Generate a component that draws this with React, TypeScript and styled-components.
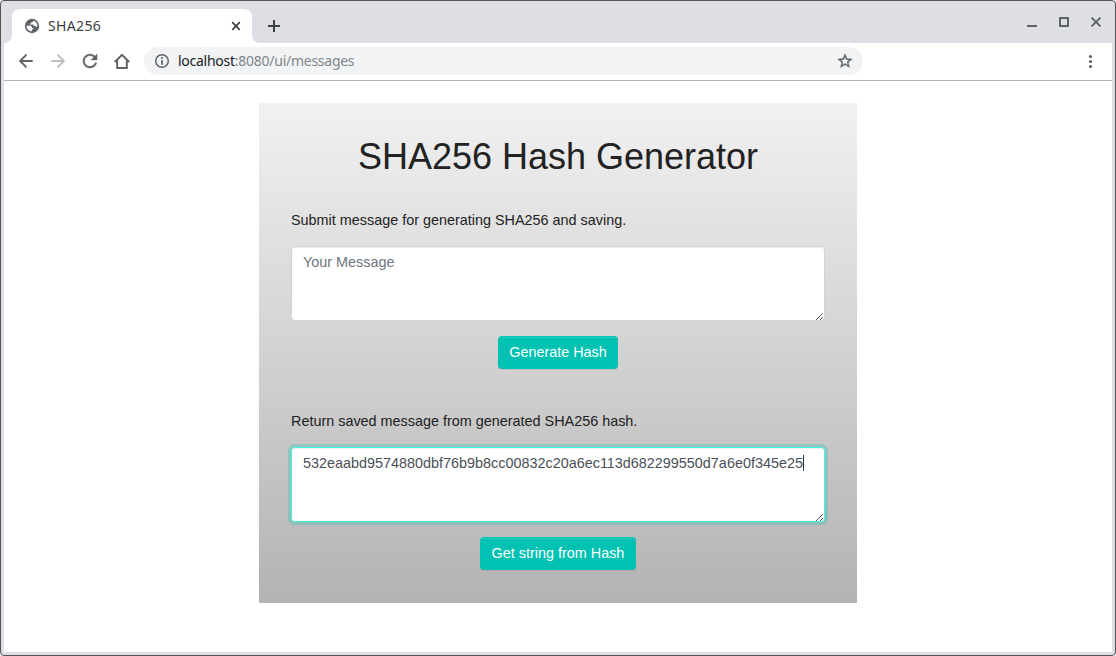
import React from 'react';
import styled, { createGlobalStyle } from 'styled-components';

const GlobalStyle = createGlobalStyle`
  * { box-sizing: border-box; }
  html, body { margin: 0; padding: 0; background: #fff; }
  body { font-family: "Liberation Sans", Arial, sans-serif; overflow: hidden; }
`;

const Window = styled.div`
  width: 1116px;
  height: 656px;
  display: flex;
  flex-direction: column;
  padding: 0 3px 3px;
  border: 1px solid #535257;
  border-radius: 4px;
  background: #dedfe5;
`;

const TabStrip = styled.header`
  height: 42px;
  display: flex;
  align-items: flex-end;
  padding-left: 8px;
  flex: none;
`;

const Tab = styled.div`
  position: relative;
  width: 240px;
  height: 34px;
  display: flex;
  align-items: center;
  padding: 0 9px 0 12px;
  background: #fff;
  border-radius: 8px 8px 0 0;
  &::before,
  &::after {
    content: '';
    position: absolute;
    bottom: 0;
    width: 8px;
    height: 8px;
  }
  &::before {
    left: -8px;
    background: radial-gradient(circle at 0 0, transparent 7.5px, #fff 8.5px);
  }
  &::after {
    right: -8px;
    background: radial-gradient(circle at 100% 0, transparent 7.5px, #fff 8.5px);
  }
`;

const TabTitle = styled.span`
  flex: 1;
  margin-left: 8px;
  font: 14px/18px "Noto Sans", "Open Sans", sans-serif;
  letter-spacing: 0.35px;
  color: #3c4043;
`;

const NewTab = styled.div`
  display: flex;
  margin-left: 14px;
  padding-bottom: 9px;
`;

const WindowControls = styled.div`
  display: flex;
  gap: 16px;
  margin-left: auto;
  padding: 0 8px 13px 0;
`;

const Toolbar = styled.nav`
  height: 38px;
  display: flex;
  align-items: center;
  flex: none;
  padding: 0 14px 1px 14px;
  background: #fff;
  border-bottom: 1px solid #b3b3b5;
`;

const NavButtons = styled.div`
  display: flex;
  gap: 16px;
`;

const AddressBar = styled.div`
  width: 719px;
  height: 28px;
  margin-left: 14px;
  padding: 0 10px;
  display: flex;
  align-items: center;
  border-radius: 14px;
  background: #f1f3f4;
`;

const Url = styled.span`
  flex: 1;
  margin-left: 8px;
  font: 14px/20px "Noto Sans", "Open Sans", sans-serif;
  letter-spacing: -0.26px;
  color: #80868b;
`;

const Host = styled.span`
  color: #202124;
`;

const MenuSlot = styled.div`
  display: flex;
  margin-left: auto;
`;

const Glyph = styled.svg`
  display: block;
  flex: none;
`;

const Page = styled.main`
  flex: 1;
  display: flex;
  justify-content: center;
  align-items: flex-start;
  padding-top: 22px;
  background: #fff;
`;

const Panel = styled.section`
  width: 598px;
  height: 500px;
  padding: 32px 32px 0;
  background: linear-gradient(#f1f1f1, #b3b3b3);
  color: #222;
`;

const Title = styled.h1`
  margin: 0 0 31px;
  font-size: 36px;
  line-height: 43px;
  font-weight: 400;
  text-align: center;
`;

const Form = styled.form`
  display: flex;
  flex-direction: column;
  align-items: center;
  margin-bottom: 41px;
`;

const Label = styled.label`
  align-self: stretch;
  margin-bottom: 15px;
  font-size: 14.4px;
  line-height: 22px;
`;

const Field = styled.div<{ $active?: boolean }>`
  position: relative;
  align-self: stretch;
  height: 75px;
  padding: 5px 11px;
  border: 1px solid ${(p) => (p.$active ? '#42f3e2' : '#ced4da')};
  border-radius: 3.6px;
  background: #fff;
  box-shadow: inset 0 1px 1px rgba(0, 0, 0, 0.075)${(p) =>
    p.$active ? ', 0 0 0 3px rgba(0, 195, 178, 0.25)' : ''};
  color: ${(p) => (p.$active ? '#495057' : '#6c757d')};
  font-size: 14.4px;
  line-height: 21.6px;
  white-space: nowrap;
`;

const Caret = styled.span`
  display: inline-block;
  width: 1px;
  height: 16px;
  vertical-align: -3px;
  background: #30353a;
`;

const ResizeGrip = styled.svg`
  position: absolute;
  right: 0;
  bottom: 0;
`;

const Button = styled.button<{ $width: number }>`
  width: ${(p) => p.$width}px;
  height: 33px;
  margin-top: 15px;
  padding: 0;
  border: 1px solid #00c2b2;
  border-radius: 3.6px;
  background: #00c2b2;
  box-shadow: inset 0 1px 0 rgba(255, 255, 255, 0.15), 0 1px 1px rgba(0, 0, 0, 0.075);
  color: #fff;
  font: 14.4px/21.6px "Liberation Sans", Arial, sans-serif;
  white-space: nowrap;
`;

const icons = {
  reload: 'M17.650 6.350C16.200 4.900 14.210 4 12 4c-4.420 0-7.990 3.580-7.990 8s3.570 8 7.990 8c3.730 0 6.840-2.550 7.730-6h-2.080c-.82 2.330-3.040 4-5.650 4-3.310 0-6-2.690-6-6s2.690-6 6-6c1.660 0 3.140.69 4.220 1.780L13 11h7V4l-2.350 2.350z',
  star: 'M22 9.240l-7.190-.62L12 2 9.190 8.630 2 9.240l5.460 4.730L5.820 21 12 17.270 18.180 21l-1.630-7.030L22 9.240zM12 15.400l-3.760 2.270 1-4.280-3.320-2.880 4.380-.38L12 6.100l1.710 4.040 4.380.38-3.320 2.880 1 4.280L12 15.400z',
};

function Grip() {
  return (
    <ResizeGrip width="8" height="8" viewBox="0 0 8 8" shapeRendering="crispEdges" fill="#555">
      {[0, 1, 2, 3, 4, 5, 6].map((i) => (
        <rect key={i} x={i} y={7 - i} width="1" height="1" />
      ))}
      {[4, 5, 6].map((i) => (
        <rect key={`s${i}`} x={i} y={11 - i} width="1" height="1" />
      ))}
    </ResizeGrip>
  );
}

export default function App() {
  return (
    <>
      <GlobalStyle />
      <Window>
        <TabStrip>
          <Tab>
            <Glyph width="16" height="16" viewBox="0 0 16 16">
              <circle cx="8" cy="8" r="7.200" fill="#5f6368" />
              <path
                fill="#fff"
                d="M2.500 7.800h3.300c1.300 0 2.100.6 2.100 1.600v.7h1.300v1c-.9.1-1.400.5-1.400 1.200v1C4.900 13.300 2.500 11 2.500 7.800zM9.200 2.800c-.1 1-.8 1.500-1.900 1.500v1.200H5.900v.9l3.100.1 1 1.400h1.500l1 1 .8-.5c.5-2.500-1.200-5-4.100-5.600z"
              />
            </Glyph>
            <TabTitle>SHA256</TabTitle>
            <Glyph width="14" height="14" viewBox="0 0 14 14" stroke="#3c4043" strokeWidth="1.7">
              <path d="M3.2 3.2l7.600 7.600M10.800 3.200l-7.600 7.600" />
            </Glyph>
          </Tab>
          <NewTab>
            <Glyph width="16" height="16" viewBox="0 0 16 16" stroke="#3c4043" strokeWidth="2">
              <path d="M8 2v12M2 8h12" />
            </Glyph>
          </NewTab>
          <WindowControls>
            <Glyph width="16" height="16" viewBox="0 0 16 16" fill="#5f6368">
              <path d="M3 11h10v2H3z" />
            </Glyph>
            <Glyph width="16" height="16" viewBox="0 0 16 16" fill="none" stroke="#5f6368" strokeWidth="2">
              <path d="M4 4h8v8H4z" />
            </Glyph>
            <Glyph width="16" height="16" viewBox="0 0 16 16" stroke="#5f6368" strokeWidth="2">
              <path d="M3.600 3.600l8.800 8.800M12.400 3.600l-8.800 8.800" />
            </Glyph>
          </WindowControls>
        </TabStrip>
        <Toolbar>
          <NavButtons>
            <Glyph width="16" height="16" viewBox="0 0 16 16" fill="none" stroke="#5f6368" strokeWidth="1.9">
              <path d="M14.700 8H2.500M8.500 1.600L2.100 8l6.400 6.400" />
            </Glyph>
            <Glyph width="16" height="16" viewBox="0 0 16 16" fill="none" stroke="#bbbdc0" strokeWidth="1.9">
              <path d="M1.300 8h12.200M7.500 1.600L13.900 8l-6.400 6.400" />
            </Glyph>
            <Glyph width="16" height="16" viewBox="3 3 18 18" fill="#5f6368" stroke="#5f6368" strokeWidth="0.3">
              <path d={icons.reload} />
            </Glyph>
            <Glyph width="16" height="16" viewBox="0 0 16 16" fill="none" stroke="#5f6368" strokeWidth="2">
              <path d="M.8 9L8 1.800 15.200 9M3.200 7.500V15h9.600V7.500" />
            </Glyph>
          </NavButtons>
          <AddressBar>
            <Glyph width="16" height="16" viewBox="0 0 16 16" fill="#5f6368">
              <circle cx="8" cy="8" r="6.300" fill="none" stroke="#5f6368" strokeWidth="1.500" />
              <path d="M7.100 4.300h1.800v1.800H7.100zM7.100 7.200h1.800v4.500H7.100z" />
            </Glyph>
            <Url><Host>localhost</Host>:8080/ui/messages</Url>
            <Glyph width="16" height="16" viewBox="1 1 22 22" fill="#5f6368" stroke="#5f6368" strokeWidth="0.5">
              <path d={icons.star} />
            </Glyph>
          </AddressBar>
          <MenuSlot>
            <Glyph width="16" height="16" viewBox="0 0 16 16" fill="#5f6368">
              <circle cx="8.500" cy="3.500" r="1.600" />
              <circle cx="8.500" cy="8.500" r="1.600" />
              <circle cx="8.500" cy="13.500" r="1.600" />
            </Glyph>
          </MenuSlot>
        </Toolbar>
        <Page>
          <Panel>
            <Title>SHA256 Hash Generator</Title>
            <Form>
              <Label>Submit message for generating SHA256 and saving.</Label>
              <Field>Your Message<Grip /></Field>
              <Button type="button" $width={120}>Generate Hash</Button>
            </Form>
            <Form>
              <Label>Return saved message from generated SHA256 hash.</Label>
              <Field $active>
                532eaabd9574880dbf76b9b8cc00832c20a6ec113d682299550d7a6e0f345e25<Caret />
                <Grip />
              </Field>
              <Button type="button" $width={156}>Get string from Hash</Button>
            </Form>
          </Panel>
        </Page>
      </Window>
    </>
  );
}
